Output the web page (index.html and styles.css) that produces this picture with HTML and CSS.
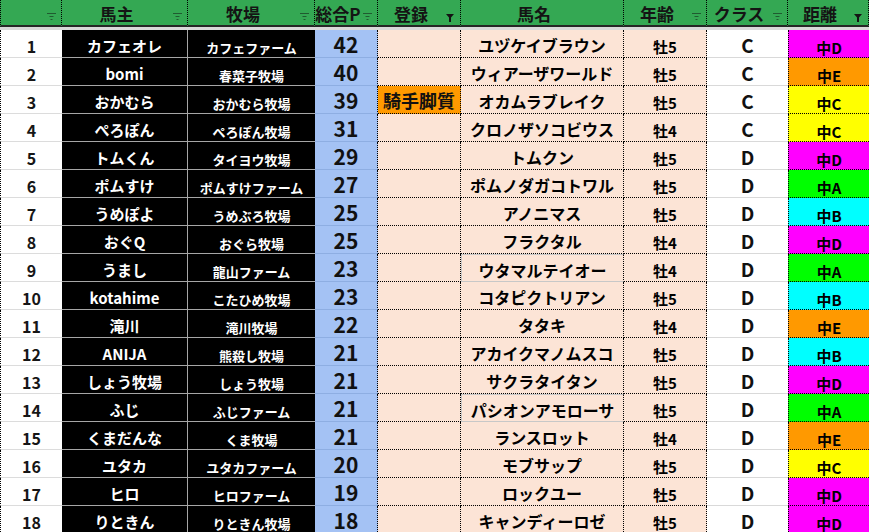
FILE: index.html
```html
<!DOCTYPE html>
<html lang="ja">
<head>
<meta charset="utf-8">
<title>馬主一覧</title>
<link rel="stylesheet" href="styles.css">
</head>
<body>
<div class="sheet">
  <div class="hdr">
    <div class="hc first"><svg class="flt" width="9" height="7" viewBox="0 0 9 7"><path d="M0 0.5h9M2.5 3.5h4M3.5 6.5h2" stroke="currentColor"/></svg></div>
    <div class="hc"><span>馬主</span><svg class="flt" width="9" height="7" viewBox="0 0 9 7"><path d="M0 0.5h9M2.5 3.5h4M3.5 6.5h2" stroke="currentColor"/></svg></div>
    <div class="hc"><span>牧場</span><svg class="flt" width="9" height="7" viewBox="0 0 9 7"><path d="M0 0.5h9M2.5 3.5h4M3.5 6.5h2" stroke="currentColor"/></svg></div>
    <div class="hc"><span>総合P</span><svg class="flt" width="9" height="7" viewBox="0 0 9 7"><path d="M0 0.5h9M2.5 3.5h4M3.5 6.5h2" stroke="currentColor"/></svg></div>
    <div class="hc"><span>登録</span><svg class="flt on" width="8" height="8" viewBox="0 0 8 8"><path d="M0 0h8L5 3.5V8H3V3.5z" fill="#141414"/></svg></div>
    <div class="hc"><span>馬名</span></div>
    <div class="hc"><span>年齢</span><svg class="flt" width="9" height="7" viewBox="0 0 9 7"><path d="M0 0.5h9M2.5 3.5h4M3.5 6.5h2" stroke="currentColor"/></svg></div>
    <div class="hc"><span>クラス</span><svg class="flt" width="9" height="7" viewBox="0 0 9 7"><path d="M0 0.5h9M2.5 3.5h4M3.5 6.5h2" stroke="currentColor"/></svg></div>
    <div class="hc"><span>距離</span><svg class="flt on" width="8" height="8" viewBox="0 0 8 8"><path d="M0 0h8L5 3.5V8H3V3.5z" fill="#141414"/></svg></div>
  </div>
  <div class="band"></div>

  <div class="row"><div class="c idx">1</div><div class="c own">カフェオレ</div><div class="c farm">カフェファーム</div><div class="c pt">42</div><div class="c reg"></div><div class="c horse">ユヅケイブラウン</div><div class="c age">牡5</div><div class="c cls">C</div><div class="c dist dD">中D</div></div>
  <div class="row"><div class="c idx">2</div><div class="c own">bomi</div><div class="c farm">春菜子牧場</div><div class="c pt">40</div><div class="c reg"></div><div class="c horse">ウィアーザワールド</div><div class="c age">牡5</div><div class="c cls">C</div><div class="c dist dE">中E</div></div>
  <div class="row"><div class="c idx">3</div><div class="c own">おかむら</div><div class="c farm">おかむら牧場</div><div class="c pt">39</div><div class="c reg hit">騎手脚質</div><div class="c horse">オカムラブレイク</div><div class="c age">牡5</div><div class="c cls">C</div><div class="c dist dC">中C</div></div>
  <div class="row"><div class="c idx">4</div><div class="c own">ぺろぽん</div><div class="c farm">ぺろぽん牧場</div><div class="c pt">31</div><div class="c reg"></div><div class="c horse">クロノザソコビウス</div><div class="c age">牡4</div><div class="c cls">C</div><div class="c dist dC">中C</div></div>
  <div class="row"><div class="c idx">5</div><div class="c own">トムくん</div><div class="c farm">タイヨウ牧場</div><div class="c pt">29</div><div class="c reg"></div><div class="c horse">トムクン</div><div class="c age">牡5</div><div class="c cls">D</div><div class="c dist dD">中D</div></div>
  <div class="row"><div class="c idx">6</div><div class="c own">ポムすけ</div><div class="c farm">ポムすけファーム</div><div class="c pt">27</div><div class="c reg"></div><div class="c horse">ポムノダガコトワル</div><div class="c age">牡5</div><div class="c cls">D</div><div class="c dist dA">中A</div></div>
  <div class="row"><div class="c idx">7</div><div class="c own">うめぽよ</div><div class="c farm">うめぶろ牧場</div><div class="c pt">25</div><div class="c reg"></div><div class="c horse">アノニマス</div><div class="c age">牡5</div><div class="c cls">D</div><div class="c dist dB">中B</div></div>
  <div class="row"><div class="c idx">8</div><div class="c own">おぐQ</div><div class="c farm">おぐら牧場</div><div class="c pt">25</div><div class="c reg"></div><div class="c horse">フラクタル</div><div class="c age">牡4</div><div class="c cls">D</div><div class="c dist dD">中D</div></div>
  <div class="row"><div class="c idx">9</div><div class="c own">うまし</div><div class="c farm">龍山ファーム</div><div class="c pt">23</div><div class="c reg"></div><div class="c horse boxed">ウタマルテイオー</div><div class="c age">牡4</div><div class="c cls">D</div><div class="c dist dA">中A</div></div>
  <div class="row"><div class="c idx">10</div><div class="c own">kotahime</div><div class="c farm">こたひめ牧場</div><div class="c pt">23</div><div class="c reg"></div><div class="c horse">コタピクトリアン</div><div class="c age">牡5</div><div class="c cls">D</div><div class="c dist dB">中B</div></div>
  <div class="row"><div class="c idx">11</div><div class="c own">滝川</div><div class="c farm">滝川牧場</div><div class="c pt">22</div><div class="c reg"></div><div class="c horse">タタキ</div><div class="c age">牡4</div><div class="c cls">D</div><div class="c dist dE">中E</div></div>
  <div class="row"><div class="c idx">12</div><div class="c own">ANIJA</div><div class="c farm">熊殺し牧場</div><div class="c pt">21</div><div class="c reg"></div><div class="c horse">アカイクマノムスコ</div><div class="c age">牡5</div><div class="c cls">D</div><div class="c dist dB">中B</div></div>
  <div class="row"><div class="c idx">13</div><div class="c own">しょう牧場</div><div class="c farm">しょう牧場</div><div class="c pt">21</div><div class="c reg"></div><div class="c horse">サクラタイタン</div><div class="c age">牡5</div><div class="c cls">D</div><div class="c dist dD">中D</div></div>
  <div class="row"><div class="c idx">14</div><div class="c own">ふじ</div><div class="c farm">ふじファーム</div><div class="c pt">21</div><div class="c reg"></div><div class="c horse boxed">パシオンアモローサ</div><div class="c age">牡5</div><div class="c cls">D</div><div class="c dist dA">中A</div></div>
  <div class="row"><div class="c idx">15</div><div class="c own">くまだんな</div><div class="c farm">くま牧場</div><div class="c pt">21</div><div class="c reg"></div><div class="c horse">ランスロット</div><div class="c age">牡4</div><div class="c cls">D</div><div class="c dist dE">中E</div></div>
  <div class="row"><div class="c idx">16</div><div class="c own">ユタカ</div><div class="c farm">ユタカファーム</div><div class="c pt">20</div><div class="c reg"></div><div class="c horse">モブサップ</div><div class="c age">牡5</div><div class="c cls">D</div><div class="c dist dC">中C</div></div>
  <div class="row"><div class="c idx">17</div><div class="c own">ヒロ</div><div class="c farm">ヒロファーム</div><div class="c pt">19</div><div class="c reg"></div><div class="c horse">ロックユー</div><div class="c age">牡5</div><div class="c cls">D</div><div class="c dist dD">中D</div></div>
  <div class="row"><div class="c idx">18</div><div class="c own">りときん</div><div class="c farm">りときん牧場</div><div class="c pt">18</div><div class="c reg"></div><div class="c horse">キャンディーロゼ</div><div class="c age">牡5</div><div class="c cls">D</div><div class="c dist dD">中D</div></div>
</div>
</body>
</html>
```

FILE: styles.css
```css
* { box-sizing: border-box; }
html, body { margin: 0; padding: 0; background: #fff; }
body {
  font-family: "Noto Sans CJK JP", "Noto Sans", sans-serif;
  font-weight: 700;
  color: #000;
  overflow: hidden;
}
.sheet { width: 869px; }

.hdr, .row {
  display: grid;
  grid-template-columns: 62px 126px 127px 63px 83px 163px 83px 81px 81px;
}

.hc {
  position: relative;
  height: 27px;
  background: #34a853;
  border-bottom: 2px solid #262626;
  border-right: 1px dotted #000;
  display: flex;
  align-items: center;
  justify-content: center;
  padding-right: 16px;
  padding-top: 1px;
  font-size: 17px;
  line-height: 1;
  color: #141414;
}
.hc.first { border-left: 1px dotted #000; }
.flt {
  position: absolute;
  right: 5px;
  top: 13px;
  color: rgba(20, 40, 25, 0.6);
}
.flt.on { top: 14px; right: 6px; }

.band { height: 3px; background: #d9d9d9; }

.c {
  height: 28px;
  display: flex;
  align-items: center;
  justify-content: center;
  line-height: 1;
  white-space: nowrap;
  overflow: hidden;
}

.idx {
  background: #fff;
  border-left: 1px dotted #000;
  border-bottom: 1px solid #dcdcdc;
  font-size: 16px;
  padding-top: 4px;
  color: #161616;
}
.own {
  background: #000;
  color: #fff;
  font-size: 15px;
  border-bottom: 1px solid #a6a6a6;
  border-right: 1px solid #a6a6a6;
  padding-top: 4px;
}
.farm {
  background: #000;
  color: #fff;
  font-size: 13px;
  border-bottom: 1px solid #a6a6a6;
  padding-top: 7px;
}
.pt {
  background: #a4c2f4;
  border-bottom: 1px solid #8eaee2;
  border-right: 1px dotted #000;
  font-size: 21px;
  padding-top: 1px;
  color: #111;
}
.reg {
  background: #fce4d6;
  border-bottom: 1px dotted #000;
  border-right: 1px dotted #000;
  font-size: 18px;
}
.reg.hit { background: #ff9900; color: #111; padding-top: 1px; }
.horse {
  background: #fce4d6;
  border-bottom: 1px dotted #000;
  border-right: 1px dotted #000;
  font-size: 16px;
  padding-top: 3px;
}
.horse.boxed {
  border: 1px solid #c8c8c8;
  border-right: 1px dotted #000;
}
.age {
  background: #fce4d6;
  border-bottom: 1px dotted #000;
  border-right: 1px dotted #000;
  font-size: 15px;
  padding-top: 6px;
}
.cls {
  background: #fff;
  border-bottom: 1px solid #d9d9d9;
  font-size: 19px;
  padding-top: 1px;
  color: #111;
}
.dist {
  border-left: 1px dotted #000;
  border-bottom: 1px dotted #000;
  font-size: 15px;
  padding-top: 7px;
}
.dA { background: #00ff00; }
.dB { background: #00ffff; }
.dC { background: #ffff00; }
.dD { background: #ff00ff; }
.dE { background: #ff9900; }
```
